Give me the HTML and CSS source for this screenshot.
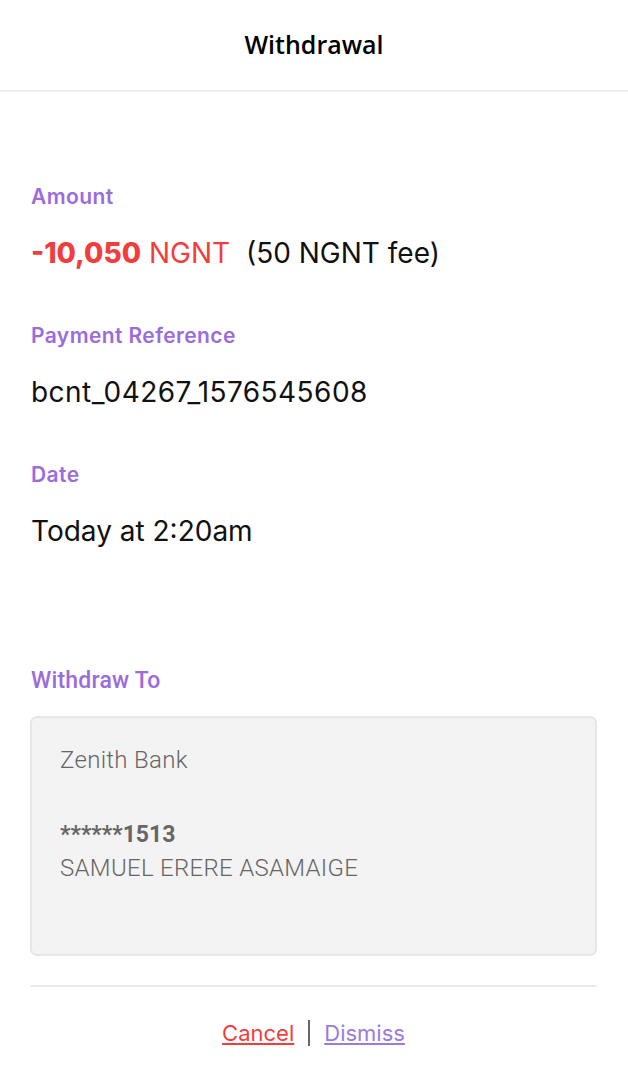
FILE: index.html
```html
<!DOCTYPE html>
<html lang="en">
<head>
    <meta charset="UTF-8">
    <meta name="viewport" content="width=device-width, initial-scale=1.0">
    <title>Withdrawal</title>

    <link rel="stylesheet" href="styles.css">
</head>
<body>
    <header class="top-bar">
        <h1>Withdrawal</h1>
    </header>

    <main class="details">
        <div class="field">
            <p class="field-label">Amount</p>
            <p class="field-value">
                <span class="amount-neg">-10,050</span>
                <span class="amount-unit">NGNT</span>
                <span class="amount-fee">(50 NGNT fee)</span>
            </p>
        </div>

        <div class="field">
            <p class="field-label">Payment Reference</p>
            <p class="field-value reference">bcnt_04267_1576545608</p>
        </div>

        <div class="field">
            <p class="field-label">Date</p>
            <p class="field-value">Today at 2:20am</p>
        </div>

        <div class="withdraw-to">
            <p class="withdraw-label">Withdraw To</p>
            <div class="bank-card">
                <p class="bank-name">Zenith Bank</p>
                <p class="account-no">******1513</p>
                <p class="account-name">SAMUEL ERERE ASAMAIGE</p>
            </div>
        </div>

        <div class="actions">
            <a href="#" class="link cancel">Cancel</a>
            <span class="sep"></span>
            <a href="#" class="link dismiss">Dismiss</a>
        </div>
    </main>
</body>
</html>
```

FILE: styles.css
```css
* {
    margin: 0;
    padding: 0;
    box-sizing: border-box;
}

body {
    font-family: Inter, "Liberation Sans", sans-serif;
    background: #fff;
    color: #111;
}

.top-bar {
    height: 92px;
    border-bottom: 2px solid #eeeeee;
    display: flex;
    align-items: center;
    justify-content: center;
}

.top-bar h1 {
    font-family: "Open Sans", sans-serif;
    font-size: 25px;
    font-weight: 600;
    color: #000;
    margin-top: -2px;
}

.details {
    display: flex;
    flex-direction: column;
    padding: 91px 31px 0;
}

.field {
    margin-bottom: 50px;
}

.field-label {
    font-size: 21px;
    font-weight: 600;
    color: #9b6cdd;
    line-height: 28px;
    letter-spacing: 0.4px;
}

.field-value {
    font-size: 28px;
    line-height: 38px;
    margin-top: 23px;
    color: #111;
}

.reference {
    letter-spacing: 0.45px;
}

.amount-neg {
    color: #f23d3d;
    font-weight: 800;
}

.amount-unit {
    color: #f23d3d;
}

.amount-fee {
    margin-left: 8px;
}

.withdraw-to {
    margin-top: 67px;
}

.withdraw-label {
    font-family: Roboto, sans-serif;
    font-size: 23px;
    font-weight: 500;
    color: #9b6cdd;
    line-height: 28px;
    letter-spacing: 0.2px;
}

.bank-card {
    margin-top: 21px;
    margin-left: -1px;
    width: 567px;
    height: 240px;
    background: #f3f3f3;
    border: 2px solid #e6e6e6;
    border-radius: 7px;
    padding: 27px 28px;
    color: #666;
    font-family: Roboto, sans-serif;
    font-size: 24px;
    font-weight: 300;
    letter-spacing: 0.3px;
}

.bank-name {
    line-height: 30px;
}

.account-no {
    margin-top: 45px;
    font-size: 23px;
    font-weight: 700;
    line-height: 30px;
    letter-spacing: 0;
}

.account-name {
    line-height: 30px;
    margin-top: 3px;
}

.actions {
    margin-top: 29px;
    margin-left: -1px;
    border-top: 2px solid #eaeaea;
    padding-top: 31px;
    display: flex;
    align-items: center;
    justify-content: center;
    gap: 14px;
}

.link {
    font-size: 22px;
    line-height: 30px;
}

.cancel {
    color: #f23d3d;
}

.dismiss {
    color: #9b7be0;
}

.sep {
    width: 2px;
    height: 26px;
    background: #666;
}
```
